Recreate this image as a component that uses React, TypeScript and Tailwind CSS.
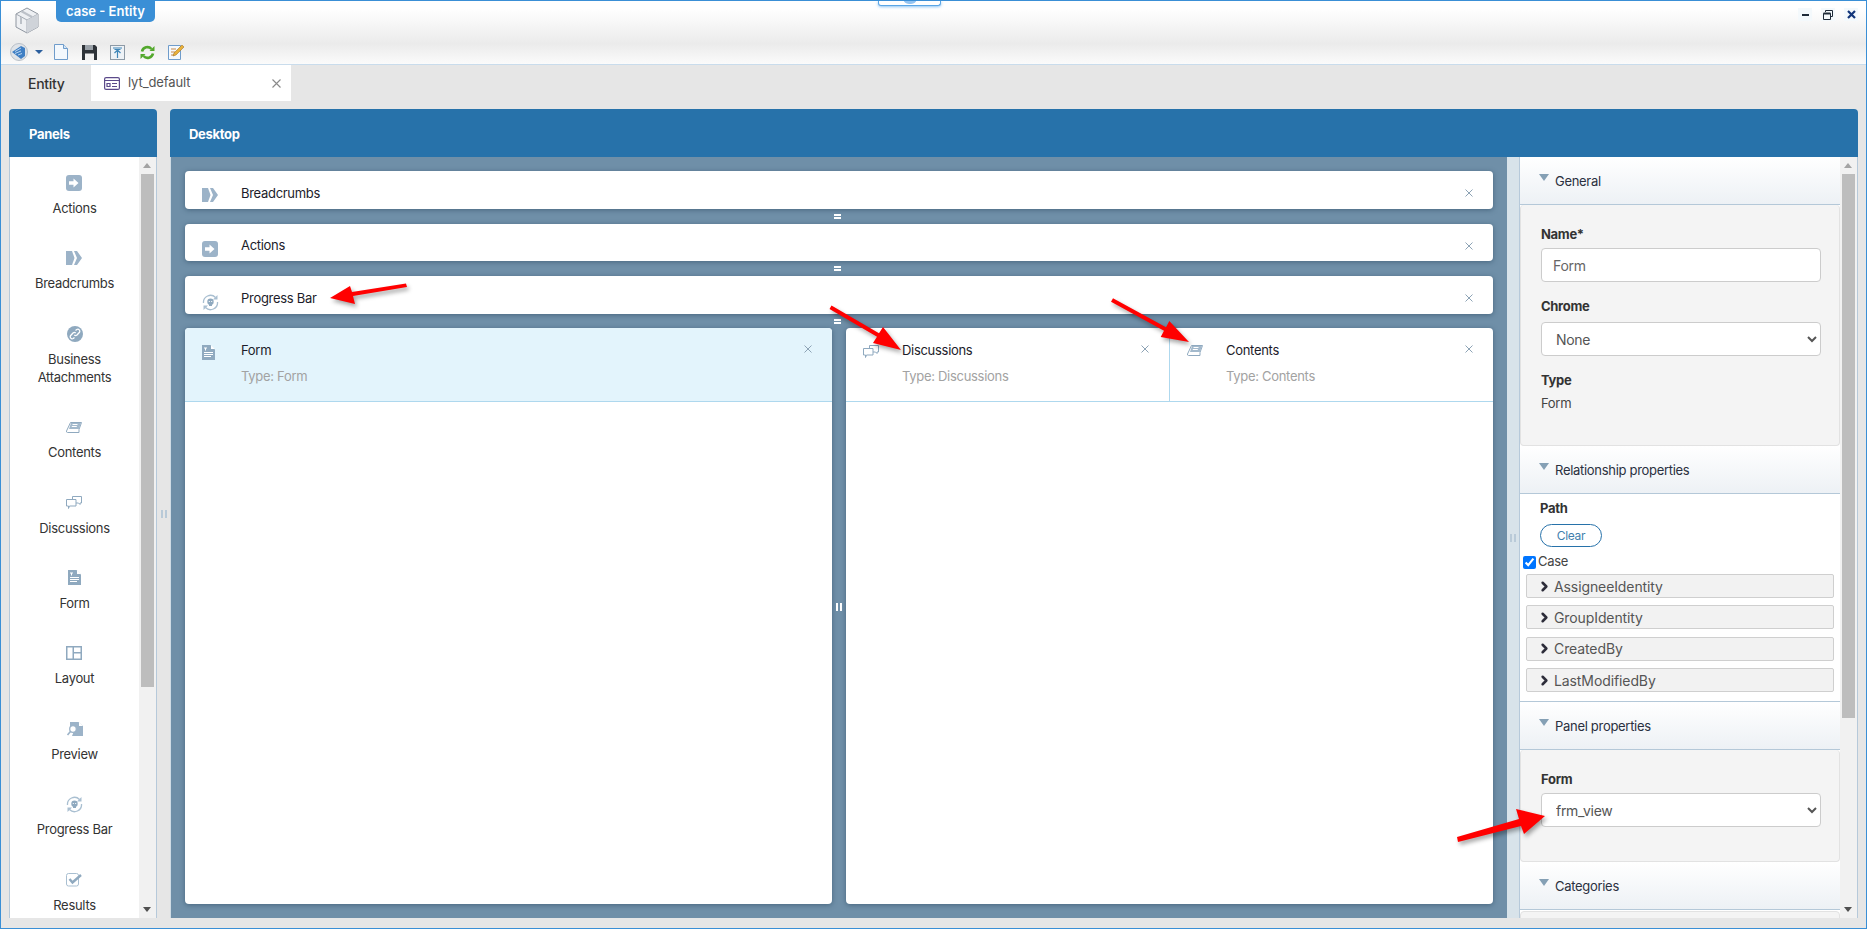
import type { ReactNode } from "react";
import { ChevronRight } from "lucide-react";

const slate = "#9cb3c8";

function ActionsIcon() {
  return (
    <svg width="16" height="16" viewBox="0 0 16 16">
      <rect width="16" height="16" rx="3" fill={slate} />
      <path d="M3 6.200h4.500V3.500L12.500 8l-5 4.500V9.800H3z" fill="#fff" />
    </svg>
  );
}

function BreadcrumbsIcon() {
  return (
    <svg width="16" height="14" viewBox="0 0 16 14">
      <path d="M0 0h6l2.500 7L6 14H0z" fill={slate} />
      <path d="M8 0h3l5 7-5 7H8l3-7z" fill={slate} />
    </svg>
  );
}

function AttachmentIcon() {
  return (
    <svg width="16" height="16" viewBox="0 0 16 16">
      <circle cx="8" cy="8" r="8" fill="#8fa9bf" />
      <path d="M8.500 4.500l1.300-1a2 2 0 0 1 2.700 2.800L10 9a2 2 0 0 1-2.700 0M7.500 11.500l-1.300 1a2 2 0 0 1-2.700-2.800L6 7a2 2 0 0 1 2.700 0" stroke="#fff" strokeWidth="1.300" fill="none" />
    </svg>
  );
}

function BookIcon() {
  return (
    <svg width="16" height="11" viewBox="0 0 16 11">
      <path d="M4.500.5h11L13 7.500v3H1.500a1.200 1.200 0 0 1-1-1.500z" fill="#fff" stroke="#8fa9bf" />
      <path d="M5 1h10l-2.200 6H3z" fill="#a3b9cc" />
      <path d="M6.500 2.500h5M5.800 4.500h5" stroke="#fff" strokeWidth="1" />
    </svg>
  );
}

function ChatIcon() {
  return (
    <svg width="16" height="13" viewBox="0 0 16 13" fill="none" stroke="#8fa9bf" strokeWidth="1">
      <path d="M6.500 3.500V.5h9v6.500h-1.500v1.500l-1.500-1.500H10" />
      <path d="M.5 3.500h9.500v6.500H3.500l-1 2.500v-2.500h-2z" fill="#fff" />
    </svg>
  );
}

function FormIcon() {
  return (
    <svg width="13" height="15" viewBox="0 0 13 15">
      <path d="M0 0h8.500L13 4.500V15H0z" fill="#8fa9bf" />
      <path d="M9 0l4 4H9z" fill="#fff" />
      <path d="M2 3h3M3.500 3v2.500M2 7.500h9M2 9.500h9M2 11.500h7" stroke="#fff" strokeWidth="1" />
    </svg>
  );
}

function LayoutIcon() {
  return (
    <svg width="16" height="14" viewBox="0 0 16 14">
      <rect width="16" height="14" fill="#8fa9bf" />
      <path d="M1.500 1.500h5v11h-5zM8 1.500h6.500v4.500H8zM8 7.500h6.500v5H8z" fill="#fff" />
    </svg>
  );
}

function PreviewIcon() {
  return (
    <svg width="16" height="14" viewBox="0 0 16 14">
      <path d="M3 0h8.500L16 4v10H5l1-2.500A4.500 4.500 0 0 0 3 4z" fill={slate} />
      <path d="M12 0l4 4h-4z" fill="#fff" />
      <circle cx="6" cy="7" r="3.300" fill="#fff" stroke={slate} strokeWidth="1.300" />
      <path d="M3.500 9.500.5 13" stroke={slate} strokeWidth="1.600" />
    </svg>
  );
}

function ProgressIcon() {
  return (
    <svg width="17" height="17" viewBox="0 0 17 17" fill="none" stroke="#a9bfd1" strokeWidth="1.300">
      <path d="M1.500 9A7 7 0 0 1 13.500 3.500M15.500 8a7 7 0 0 1-12 5.500" />
      <path d="M15.500 1v4.500H11z" fill="#a9bfd1" stroke="none" />
      <path d="M1.500 16v-4.500H6z" fill="#a9bfd1" stroke="none" />
      <circle cx="8.500" cy="7.800" r="3.200" fill="#8fa9bf" stroke="none" />
      <path d="M7 10h3v2H7z" fill="#8fa9bf" stroke="none" />
      <path d="M6.800 7.500h1M9.200 7.500h1" stroke="#fff" strokeWidth="1" />
    </svg>
  );
}

function ResultsIcon() {
  return (
    <svg width="17" height="14" viewBox="0 0 17 14" fill="none">
      <rect x=".5" y=".5" width="12" height="12.500" rx="2" stroke="#a9bfd1" />
      <path d="M3.500 6 6.500 9.500 15 2" stroke="#8fa9bf" strokeWidth="2.400" />
    </svg>
  );
}

function CloseMark() {
  return (
    <svg width="8" height="8" viewBox="0 0 8 8" stroke="#8da3b5" strokeWidth="1" className="shrink-0">
      <path d="M.5.500l7 7M7.500.500l-7 7" />
    </svg>
  );
}

const panels: { label: ReactNode; icon: ReactNode }[] = [
  { label: "Actions", icon: <ActionsIcon /> },
  { label: "Breadcrumbs", icon: <BreadcrumbsIcon /> },
  { label: <>Business<br />Attachments</>, icon: <AttachmentIcon /> },
  { label: "Contents", icon: <BookIcon /> },
  { label: "Discussions", icon: <ChatIcon /> },
  { label: "Form", icon: <FormIcon /> },
  { label: "Layout", icon: <LayoutIcon /> },
  { label: "Preview", icon: <PreviewIcon /> },
  { label: "Progress Bar", icon: <ProgressIcon /> },
  { label: "Results", icon: <ResultsIcon /> },
];

const pathRows = ["AssigneeIdentity", "GroupIdentity", "CreatedBy", "LastModifiedBy"];

function Scrollbar({ thumb }: { thumb: string }) {
  return (
    <div className="relative w-[17px] shrink-0 bg-[#f1f1f1]">
      <div className="absolute left-[4px] top-[6px] h-0 w-0 border-x-[4px] border-b-[5px] border-x-transparent border-b-[#a3a3a3]" />
      <div className={`mx-[2px] mt-[17px] w-[13px] bg-[#bdbdbd] ${thumb}`} />
      <div className="absolute bottom-[6px] left-[4px] h-0 w-0 border-x-[4px] border-t-[5px] border-x-transparent border-t-[#505050]" />
    </div>
  );
}

function BarCard({ title, icon, iconOffset, textOffset, height }: { title: string; icon: ReactNode; iconOffset: string; textOffset: string; height: string }) {
  return (
    <div className={`flex shrink-0 overflow-hidden rounded-[4px] bg-white shadow-[0_1px_5px_rgba(50,80,105,0.65)] ${height}`}>
      <div className={`ml-[17px] w-[24px] shrink-0 ${iconOffset}`}>{icon}</div>
      <div className={`ml-[15px] text-[13px] leading-[18px] text-[#1c1c2a] ${textOffset}`}>{title}</div>
      <div className="ml-auto mr-[20px] mt-[18px]">
        <CloseMark />
      </div>
    </div>
  );
}

function ZoneHeader({ title, type, icon, className }: { title: string; type: string; icon: ReactNode; className: string }) {
  return (
    <div className={`flex h-[74px] border-b border-[#aed8ee] ${className}`}>
      <div className="ml-[17px] mt-[17px] w-[24px] shrink-0">{icon}</div>
      <div className="ml-[15px] mt-[13px] flex flex-col">
        <span className="text-[13px] leading-[18px] text-[#1c1c2a]">{title}</span>
        <span className="mt-[8px] text-[13px] leading-[18px] text-[#a2a2a2]">Type: {type}</span>
      </div>
      <div className="ml-auto mr-[20px] mt-[17px]">
        <CloseMark />
      </div>
    </div>
  );
}

function DragBars({ height }: { height: string }) {
  return (
    <div className={`flex shrink-0 flex-col items-center justify-center gap-[1px] pr-[3px] ${height}`}>
      <div className="h-[2px] w-[7px] bg-white" />
      <div className="h-[2px] w-[7px] bg-white" />
    </div>
  );
}

function SideGrip({ color }: { color: string }) {
  return (
    <div className="flex gap-[2px]">
      <div className={`h-[8px] w-[2px] ${color}`} />
      <div className={`h-[8px] w-[2px] ${color}`} />
    </div>
  );
}

function SectionHeader({ title, className = "h-[48px]" }: { title: string; className?: string }) {
  return (
    <div className={`flex shrink-0 items-center border-b border-[#b4c8d8] bg-[linear-gradient(#ffffff,#edf1f5)] pl-[19px] ${className}`}>
      <div className="mt-[-6px] h-0 w-0 border-x-[5px] border-t-[7px] border-x-transparent border-t-[#85a0b5]" />
      <span className="ml-[6px] text-[13px] leading-[18px] text-[#2a3040]">{title}</span>
    </div>
  );
}

function FieldLabel({ children }: { children: ReactNode }) {
  return <div className="text-[13px] font-bold leading-[18px] text-[#333]">{children}</div>;
}

function SelectField({ value, className }: { value: string; className?: string }) {
  return (
    <select
      defaultValue={value}
      className={`h-[34px] w-[280px] rounded-[4px] border border-[#cccccc] bg-white pl-[10px] pr-[4px] text-[14px] text-[#555] ${className ?? ""}`}
    >
      <option>{value}</option>
    </select>
  );
}

function ToolbarIcons() {
  return (
    <div className="flex h-[24px] items-center pl-[9px]">
      <svg width="18" height="18" viewBox="0 0 18 18">
        <circle cx="9" cy="9" r="8.500" fill="#dfe3e8" stroke="#b9c0c8" />
        <path d="M2 9l9-6 4 2v8l-4 3z" fill="#3f7fc4" />
        <path d="M5 8.500 11 5M5 10.500l6-2.500M8 12l4-1.500" stroke="#b7d4f0" strokeWidth="1" />
      </svg>
      <div className="ml-[7px] h-0 w-0 border-x-[4px] border-t-[4px] border-x-transparent border-t-[#2b5f9e]" />
      <svg className="ml-[11px]" width="14" height="16" viewBox="0 0 14 16">
        <path d="M.5.500h9l4 4v11H.5z" fill="#f3f8fd" stroke="#6f9ccb" />
        <path d="M9.500.500v4h4" fill="#d5e6f6" stroke="#6f9ccb" />
      </svg>
      <svg className="ml-[14px]" width="15" height="15" viewBox="0 0 15 15">
        <path d="M0 0h13l2 2v13H0z" fill="#2e3338" />
        <path d="M3 0h8v5H3z" fill="#9aa1a8" />
        <path d="M3 8.500h9V15H3z" fill="#f1f1f1" />
      </svg>
      <svg className="ml-[13px]" width="15" height="15" viewBox="0 0 15 15">
        <rect x=".5" y=".5" width="14" height="14" fill="#eef2f6" stroke="#8d9aa6" />
        <path d="M3 3h9M7.500 13V6M4.500 8l3-3 3 3M4.500 4.500h6" stroke="#3f86b8" strokeWidth="1.200" fill="none" />
      </svg>
      <svg className="ml-[15px]" width="15" height="15" viewBox="0 0 15 15" fill="none" stroke="#52a82c" strokeWidth="2.600">
        <path d="M2 6.500A5.500 5.500 0 0 1 11.500 4M13 8.500A5.500 5.500 0 0 1 3.500 11" />
        <path d="M14.500 1v5h-5z" fill="#52a82c" stroke="none" />
        <path d="M.5 14V9h5z" fill="#52a82c" stroke="none" />
      </svg>
      <svg className="ml-[13px]" width="16" height="16" viewBox="0 0 16 16">
        <path d="M.5 1.500h12v14H.5z" fill="#f5f9fd" stroke="#6f9ccb" />
        <path d="M3 5h5M3 8h4M3 11h3" stroke="#c98a4a" strokeWidth="1" />
        <path d="M14 1l2 2-8 8-3 1 1-3z" fill="#e8b03a" stroke="#a5772a" strokeWidth=".600" />
      </svg>
    </div>
  );
}

function RedArrows() {
  const arrows = [
    "M405 282.500 L406 286 L352 295 L354 303 L329 297 L349 285 L351 291 Z",
    "M830.500 304.500 L878 332.300 L882 326 L900 349 L872 342 L876 335.700 L828.500 308 Z",
    "M1112 297.200 L1165 326.200 L1168.300 320 L1188 341 L1159.700 336 L1163 329.800 L1110 300.800 Z",
    "M1456 836 L1457 841 L1520 825 L1523 833 L1544 815 L1515 808 L1518 818 Z",
  ];
  return (
    <svg className="pointer-events-none absolute left-0 top-0" width="1867" height="929">
      {arrows.map((d) => (
        <path key={d} d={d} fill="#f00" style={{ filter: "drop-shadow(2px 3px 2px rgba(0,0,0,0.35))" }} />
      ))}
    </svg>
  );
}

export default function App() {
  return (
    <div className="relative flex h-[929px] w-[1867px] flex-col overflow-hidden border border-[#3a8fd6] bg-[#e6e6e6] font-['Inter',sans-serif] text-[13px] tracking-[-0.3px]">
      {/* window chrome */}
      <div className="h-[64px] shrink-0 border-b border-[#c9dcec] bg-[linear-gradient(#ffffff_0%,#ffffff_12%,#ebebeb_68%,#fbfbfb_100%)]">
        <div className="flex h-[39px] items-start">
          <svg className="ml-[14px] mt-[6px]" width="24" height="27" viewBox="0 0 24 27">
            <path d="M12 1 23 7v13l-11 6-11-6V7z" fill="#eef0f3" stroke="#8f96a0" />
            <path d="M1 7l11 6 11-6M12 13v13" fill="none" stroke="#a3a9b2" />
            <path d="M12 13 23 7v13l-11 6z" fill="#cfd3d9" />
            <path d="M6 4l11 6M6 10v7" stroke="#bcc1c8" strokeWidth="2" fill="none" />
          </svg>
          <div className="ml-[17px] flex h-[21px] w-[99px] items-center justify-center rounded-b-[5px] bg-[#3a8fd6] text-[13px] font-semibold tracking-normal text-white">
            case - Entity
          </div>
          <div className="ml-auto mr-[8px] mt-[7px] flex items-center gap-[9px]">
            <div className="flex h-[13px] w-[14px] items-center justify-center bg-[#f4f9fc]">
              <div className="h-[2px] w-[7px] bg-[#1e2a38]" />
            </div>
            <div className="flex h-[13px] w-[14px] items-center justify-center bg-[#f4f9fc]">
              <svg width="10" height="10" viewBox="0 0 10 10" fill="none" stroke="#1e2a38">
                <path d="M2.500 2V.5h7v6H8" />
                <path d="M.5 3.500h7v6h-7z" />
                <path d="M.5 3.500h7" strokeWidth="2" />
              </svg>
            </div>
            <div className="flex h-[13px] w-[14px] items-center justify-center bg-[#f4f9fc]">
              <svg width="9" height="9" viewBox="0 0 9 9" stroke="#12357a" strokeWidth="2.200">
                <path d="M1 1l7 7M8 1 1 8" />
              </svg>
            </div>
          </div>
        </div>
        <ToolbarIcons />
      </div>
      <div className="absolute left-[877px] top-0 flex h-[5px] w-[63px] justify-center overflow-hidden rounded-b-[3px] border border-t-0 border-[#5aa6e6] bg-white shadow-[0_1px_3px_rgba(90,170,240,0.7)]">
        <div className="mt-[-9px] h-[12px] w-[14px] rounded-full bg-[#93c4f2]" />
      </div>

      {/* tabs */}
      <div className="flex h-[36px] shrink-0">
        <div className="flex w-[90px] items-center pl-[27px] text-[14px] font-medium text-[#333]">Entity</div>
        <div className="flex w-[200px] items-center bg-white pl-[13px] pr-[10px]">
          <svg width="16" height="13" viewBox="0 0 16 13" fill="none" stroke="#5b4a8a" strokeWidth="1.200">
            <rect x=".6" y=".6" width="14.800" height="11.800" rx="1.500" />
            <path d="M.6 3.500h14.800M3 6.500h3v3H3zM8 6.500h5M8 9.500h5" />
          </svg>
          <span className="ml-[8px] text-[13px] tracking-[-0.1px] text-[#555]">lyt_default</span>
          <svg className="ml-auto" width="9" height="9" viewBox="0 0 9 9" stroke="#8a8a8a" strokeWidth="1.100">
            <path d="M.5.500l8 8M8.500.500l-8 8" />
          </svg>
        </div>
      </div>

      {/* workspace */}
      <div className="flex min-h-0 flex-1 pb-[10px] pl-[8px] pr-[8px] pt-[8px]">
        <div className="flex w-[148px] shrink-0 flex-col">
          <div className="flex h-[48px] shrink-0 items-center rounded-t-[4px] bg-[#2772aa] pl-[20px] pt-[3px] text-[13px] font-bold text-white">
            Panels
          </div>
          <div className="flex min-h-0 flex-1 overflow-hidden border-x border-[#b6c9da] bg-white">
            <div className="flex min-w-0 flex-1 flex-col items-center pt-[18px]">
              {panels.map((p, i) => (
                <div key={i} className="flex shrink-0 flex-col items-center pb-[33.4px]">
                  <div className="flex h-[16px] items-center justify-center">{p.icon}</div>
                  <div className="mt-[8px] text-center text-[13px] leading-[18px] text-[#333]">{p.label}</div>
                </div>
              ))}
            </div>
            <Scrollbar thumb="h-[513px]" />
          </div>
        </div>

        <div className="flex w-[13px] shrink-0 items-center justify-center">
          <SideGrip color="bg-[#b9cad8]" />
        </div>

        <div className="flex min-w-0 flex-1 flex-col">
          <div className="flex h-[48px] shrink-0 items-center rounded-t-[4px] bg-[#2772aa] pl-[19px] pt-[3px] text-[13px] font-bold text-white">
            Desktop
          </div>
          <div className="flex min-h-0 flex-1">
            {/* canvas */}
            <div className="flex w-[1337px] shrink-0 flex-col border-l border-[#cfdbe4] bg-[#6f8fa8] px-[14px] pb-[14px] pt-[14px]">
              <BarCard title="Breadcrumbs" icon={<BreadcrumbsIcon />} iconOffset="mt-[17px]" textOffset="mt-[13px]" height="h-[38px]" />
              <DragBars height="h-[15px]" />
              <BarCard title="Actions" icon={<ActionsIcon />} iconOffset="mt-[17px]" textOffset="mt-[12px]" height="h-[37px]" />
              <DragBars height="h-[15px]" />
              <BarCard title="Progress Bar" icon={<ProgressIcon />} iconOffset="mt-[18px]" textOffset="mt-[13px]" height="h-[38px]" />
              <DragBars height="h-[14px]" />
              <div className="flex min-h-0 flex-1">
                <div className="flex-1 overflow-hidden rounded-[4px] bg-white shadow-[0_1px_5px_rgba(50,80,105,0.65)]">
                  <ZoneHeader title="Form" type="Form" icon={<FormIcon />} className="bg-[#e3f4fc]" />
                </div>
                <div className="flex w-[14px] shrink-0 items-center justify-center pb-[18px]">
                  <SideGrip color="bg-white" />
                </div>
                <div className="flex w-[647px] shrink-0 items-start overflow-hidden rounded-[4px] bg-white shadow-[0_1px_5px_rgba(50,80,105,0.65)]">
                  <ZoneHeader title="Discussions" type="Discussions" icon={<ChatIcon />} className="w-[324px] shrink-0 border-r" />
                  <ZoneHeader title="Contents" type="Contents" icon={<BookIcon />} className="flex-1" />
                </div>
              </div>
            </div>

            <div className="flex w-[12px] shrink-0 items-center justify-center bg-[#d8e3ea]">
              <SideGrip color="bg-[#b9cad8]" />
            </div>

            {/* properties */}
            <div className="flex min-w-0 flex-1 overflow-hidden border-x border-[#b6c9da] bg-white">
              <div className="flex min-w-0 flex-1 flex-col">
                <SectionHeader title="General" />
                <div className="h-[241px] shrink-0 rounded-[4px] border-x border-b border-[#e2e2e2] bg-[#f4f4f4] pl-[20px] pt-[20px]">
                  <FieldLabel>Name*</FieldLabel>
                  <input
                    defaultValue="Form"
                    className="mt-[5px] block h-[34px] w-[280px] rounded-[4px] border border-[#cccccc] bg-white pl-[11px] text-[14px] text-[#666]"
                  />
                  <div className="mt-[15px]">
                    <FieldLabel>Chrome</FieldLabel>
                  </div>
                  <SelectField value="None" className="mt-[7px] block" />
                  <div className="mt-[15px]">
                    <FieldLabel>Type</FieldLabel>
                  </div>
                  <div className="mt-[5px] text-[13px] leading-[18px] text-[#444]">Form</div>
                </div>
                <SectionHeader title="Relationship properties" />
                <div className="h-[208px] shrink-0 border-b border-[#b4c8d8] pt-[5px]">
                  <div className="pl-[20px]">
                    <FieldLabel>Path</FieldLabel>
                    <button className="mt-[7px] block h-[23px] w-[62px] rounded-full border border-[#2772aa] bg-white text-[12px] text-[#3f7fae]">
                      Clear
                    </button>
                  </div>
                  <label className="mt-[8px] flex h-[14px] items-center pl-[3px] text-[13px] text-[#444]">
                    <input type="checkbox" defaultChecked className="m-0 h-[13px] w-[13px]" />
                    <span className="ml-[2px]">Case</span>
                  </label>
                  <div className="ml-[6px] mt-[5px] flex w-[308px] flex-col gap-[7.4px]">
                    {pathRows.map((r) => (
                      <div key={r} className="flex h-[24px] items-center rounded-[2px] border border-[#cfcfcf] bg-[#f2f2f2] pl-[12px] text-[14px] tracking-[-0.1px] text-[#555]">
                        <ChevronRight size={15} strokeWidth={4} color="#2d2d3a" className="ml-[-2px]" />
                        <span className="ml-[2px]">{r}</span>
                      </div>
                    ))}
                  </div>
                </div>
                <SectionHeader title="Panel properties" />
                <div className="h-[112px] shrink-0 rounded-[4px] border-x border-b border-[#e2e2e2] bg-[#f4f4f4] pl-[20px] pt-[20px]">
                  <FieldLabel>Form</FieldLabel>
                  <SelectField value="frm_view" className="mt-[5px] block" />
                </div>
                <SectionHeader title="Categories" />
                <div className="mt-[1px] h-[20px] shrink-0 rounded-[4px] border border-[#e2e2e2] bg-[#f4f4f4]" />
              </div>
              <Scrollbar thumb="h-[544px]" />
            </div>
          </div>
        </div>
      </div>

      <RedArrows />
    </div>
  );
}
